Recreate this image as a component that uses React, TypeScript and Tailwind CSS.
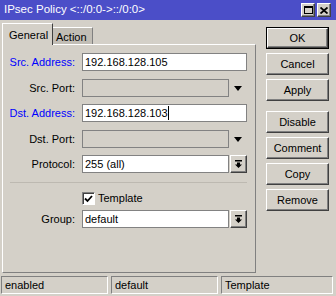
import React from 'react'

const raised = 'border border-t-white border-l-white border-r-[#404040] border-b-[#404040] shadow-[inset_-1px_-1px_0_#808080]'
const sunken = 'border border-t-[#808080] border-l-[#808080] border-r-white border-b-white'

function DropButton() {
  return (
    <div className={`ml-[1px] w-[17px] h-[18px] bg-[#d4d0c8] flex items-center justify-center ${raised}`}>
      <svg width="7" height="8" viewBox="0 0 7 8">
        <path d="M0 0h7v1.5H0z M2 2.5h3v2h2L3.5 8 0 4.5h2z" fill="#000" />
      </svg>
    </div>
  )
}

function PlainArrow() {
  return (
    <div className="w-[18px] h-[18px] flex items-center justify-center">
      <svg width="8" height="5" viewBox="0 0 8 5">
        <path d="M0 0h8L4 5z" fill="#000" />
      </svg>
    </div>
  )
}

function Row({ label, blue, className = '', children }: { label: string; blue?: boolean; className?: string; children: React.ReactNode }) {
  return (
    <div className={`flex items-center h-[18px] ${className}`}>
      <span className={`w-[72px] mr-[7px] text-right ${blue ? 'text-[#0000ff]' : 'text-black'}`}>{label}</span>
      {children}
    </div>
  )
}

function Field({ value, wide, disabled, cursor }: { value?: string; wide?: boolean; disabled?: boolean; cursor?: boolean }) {
  return (
    <div className={`${wide ? 'w-[165px]' : 'w-[147px]'} h-[18px] border border-[#828282] ${disabled ? 'bg-[#d4d0c8]' : 'bg-white'} flex items-center pl-[2px]`}>
      <span>{value}</span>
      {cursor && <span className="w-[1px] h-[14px] bg-black" />}
    </div>
  )
}

function Btn({ label, primary, className = '' }: { label: string; primary?: boolean; className?: string }) {
  return (
    <div className={`w-[63px] h-[22px] ${primary ? 'border border-black' : ''} ${className}`}>
      <div className={`w-full h-full flex items-center justify-center bg-[#d4d0c8] ${raised}`}>{label}</div>
    </div>
  )
}

export default function App() {
  return (
    <div className="w-[336px] h-[296px] bg-[#d4d0c8] flex flex-col text-[11px] text-black font-['Liberation_Sans',Arial,sans-serif] overflow-hidden">
      <div className="h-[20px] bg-[#4b4ec8] flex items-center pl-[4px] pr-[5px] text-white text-[11.5px]">
        <span>IPsec Policy &lt;::/0:0-&gt;::/0:0&gt;</span>
        <div className="ml-auto flex gap-[2px]">
          <div className={`w-[14px] h-[14px] bg-[#d4d0c8] flex items-center justify-center ${raised}`}>
            <svg width="9" height="8" viewBox="0 0 9 8">
              <path d="M0 0h9v8H0z M1 2v5h7V2z" fill="#000" fillRule="evenodd" />
            </svg>
          </div>
          <div className={`w-[14px] h-[14px] bg-[#d4d0c8] flex items-center justify-center ${raised}`}>
            <svg width="8" height="7" viewBox="0 0 8 7">
              <path d="M0.5 0.5l7 6M7.5 0.5l-7 6" stroke="#000" strokeWidth="1.8" />
            </svg>
          </div>
        </div>
      </div>

      <div className="h-[253px] flex">
        <div className="ml-[2px] mt-[3px] w-[254px] flex flex-col">
          <div className="h-[21px] flex items-end">
            <div className="relative z-10 -mb-[1px] h-[22px] w-[51px] pl-[6px] pt-[3px] bg-[#d4d0c8] border-t border-l border-t-white border-l-white border-r border-r-[#404040]">
              General
            </div>
            <div className="h-[17px] w-[40px] pl-[3px] pt-[1px] bg-[#c2beb6] border-t border-t-white border-r border-r-[#808080]">
              Action
            </div>
          </div>
          <div className="h-[229px] border border-t-white border-l-white border-r-[#808080] border-b-[#808080] flex flex-col">
            <Row label="Src. Address:" blue className="mt-[8px]">
              <Field value="192.168.128.105" wide />
            </Row>
            <Row label="Src. Port:" className="mt-[8px]">
              <Field disabled />
              <PlainArrow />
            </Row>
            <Row label="Dst. Address:" blue className="mt-[7px]">
              <Field value="192.168.128.103" wide cursor />
            </Row>
            <Row label="Dst. Port:" className="mt-[8px]">
              <Field disabled />
              <PlainArrow />
            </Row>
            <Row label="Protocol:" className="mt-[7px]">
              <Field value="255 (all)" />
              <DropButton />
            </Row>
            <div className="mt-[9px] ml-[7px] w-[237px] h-[1px] bg-[#bdb9b1]" />
            <div className="mt-[9px] ml-[79px] flex items-center h-[13px]">
              <div className={`w-[13px] h-[13px] bg-white flex items-center justify-center ${sunken} shadow-[inset_1px_1px_0_#404040]`}>
                <svg width="9" height="8" viewBox="0 0 9 8">
                  <path d="M1 3.5l2.5 2.5L8 1" stroke="#000" strokeWidth="1.8" fill="none" />
                </svg>
              </div>
              <span className="ml-[3px]">Template</span>
            </div>
            <Row label="Group:" className="mt-[5px]">
              <Field value="default" />
              <DropButton />
            </Row>
          </div>
        </div>

        <div className="ml-[10px] mt-[7px] flex flex-col gap-[4px]">
          <Btn label="OK" primary />
          <Btn label="Cancel" />
          <Btn label="Apply" />
          <Btn label="Disable" className="mt-[6px]" />
          <Btn label="Comment" />
          <Btn label="Copy" />
          <Btn label="Remove" />
        </div>
      </div>

      <div className="mt-[3px] h-[18px] flex gap-[3px] pl-[1px]">
        <div className={`w-[107px] h-full flex items-center pl-[3px] ${sunken}`}>enabled</div>
        <div className={`w-[107px] h-full flex items-center pl-[3px] ${sunken}`}>default</div>
        <div className={`w-[112px] h-full flex items-center pl-[3px] ${sunken}`}>Template</div>
      </div>
    </div>
  )
}
